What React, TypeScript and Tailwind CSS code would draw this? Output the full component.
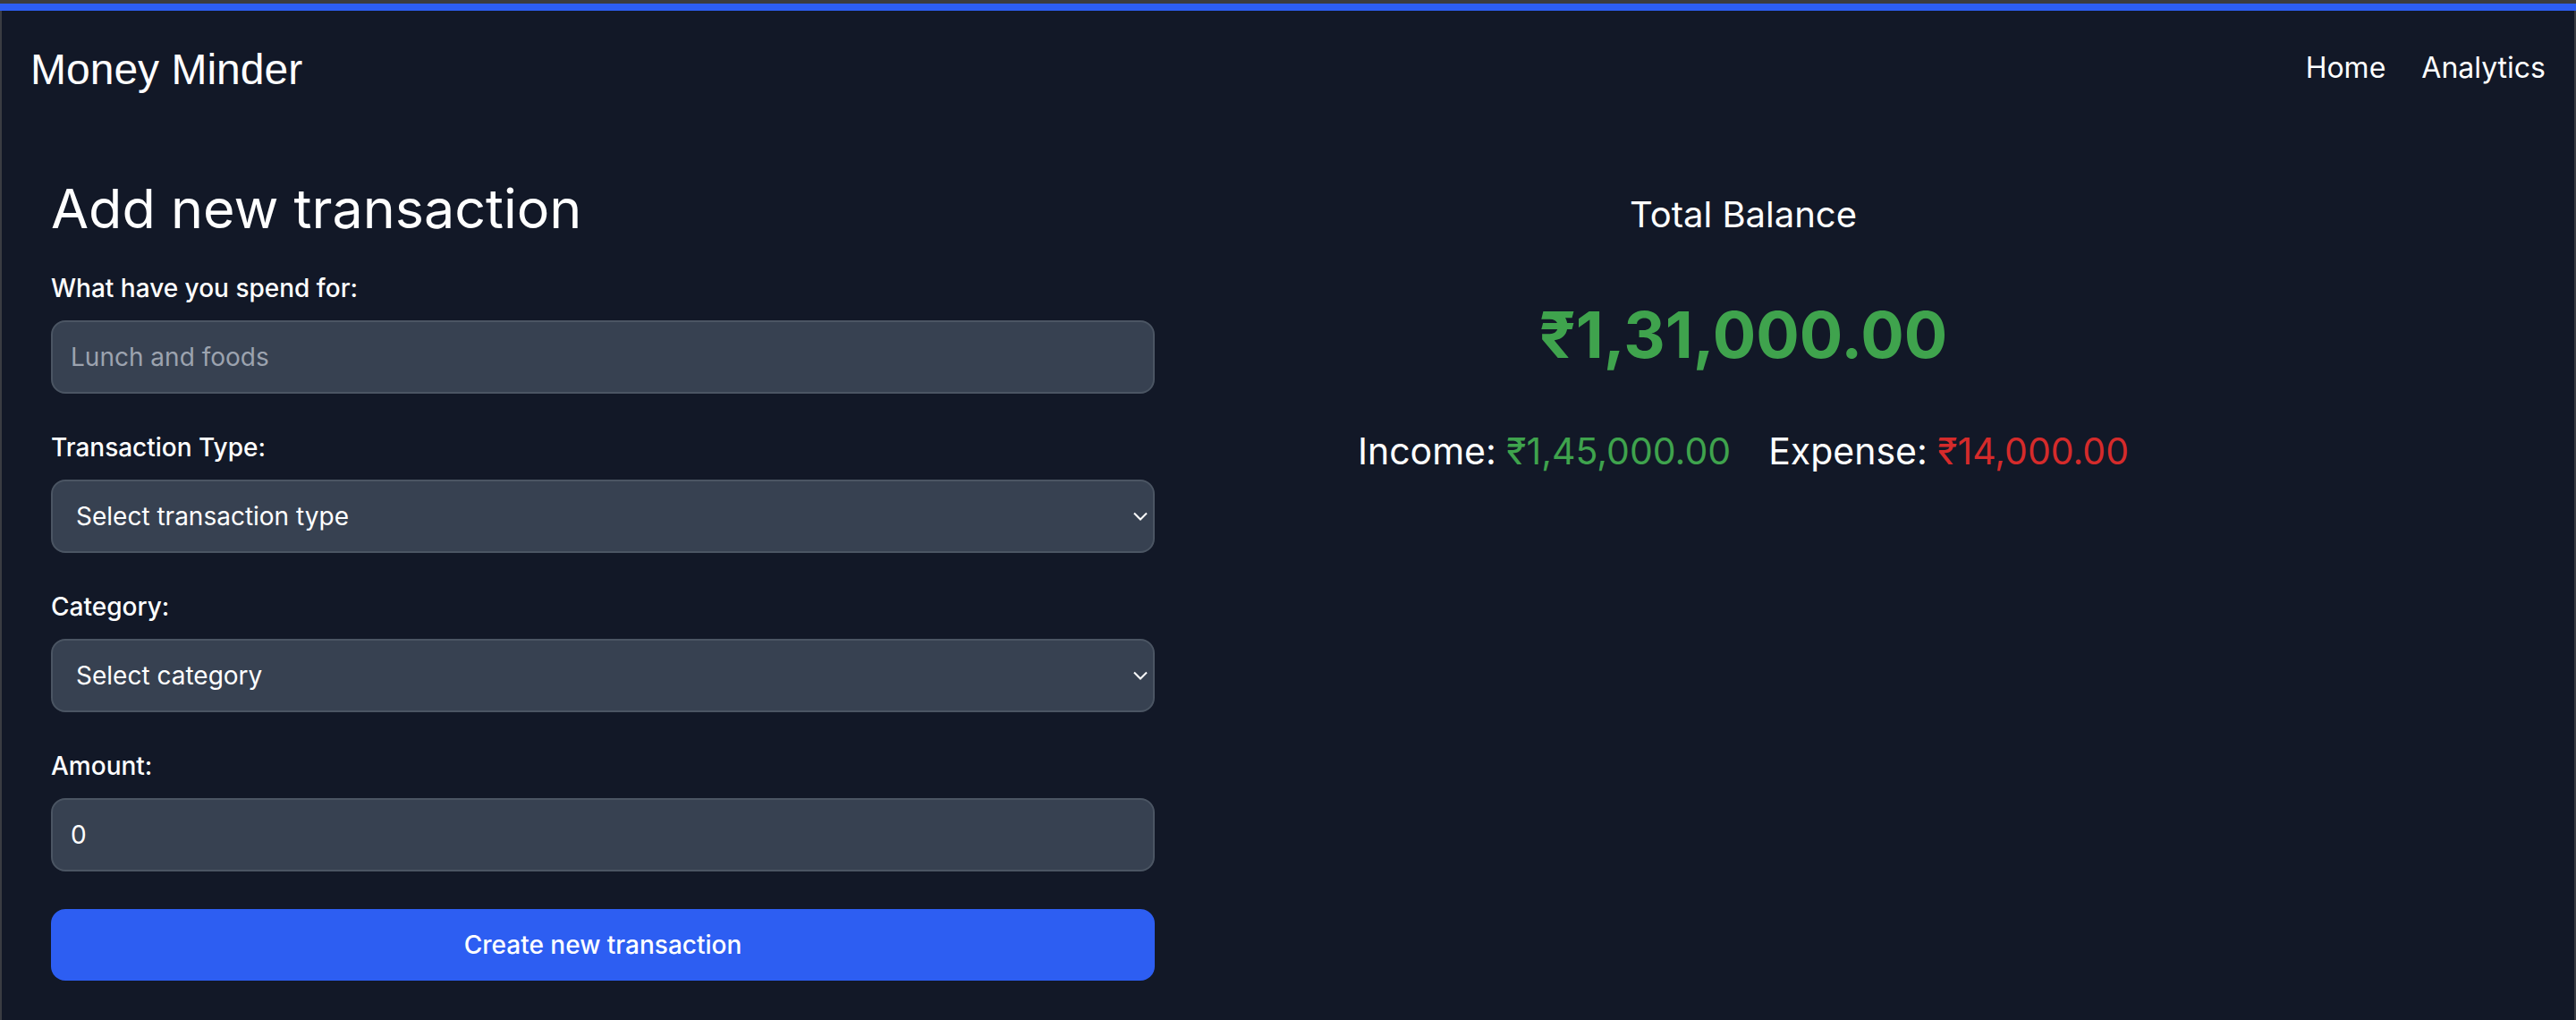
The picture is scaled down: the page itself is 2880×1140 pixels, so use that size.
import { useState } from "react";

const transactionTypes = ["Income", "Expense"];
const categories = ["Food", "Travel", "Shopping", "Bills", "Salary", "Other"];

const ChevronDown = () => (
  <svg
    width="16"
    height="10"
    viewBox="0 0 16 10"
    fill="none"
    className="pointer-events-none absolute right-[8px] top-1/2 -translate-y-1/2"
  >
    <path d="M1 1.5L8 8.5L15 1.5" stroke="white" strokeWidth="2" />
  </svg>
);

const Label = ({ text }: { text: string }) => (
  <label className="block mb-[16px] text-[28px] leading-[40px] font-medium text-white">
    {text}
  </label>
);

export default function App() {
  const [title, setTitle] = useState("");
  const [type, setType] = useState("");
  const [category, setCategory] = useState("");
  const [amount, setAmount] = useState("0");

  return (
    <div className="min-h-[1140px] bg-[#121827] font-['Inter',sans-serif] text-white">
      <div className="h-[4px] bg-[#3b3c3f]" />
      <div className="h-[8px] bg-[#2d5ef2]" />
      <div className="min-h-[1128px] border-x-2 border-[#3a3c42]">
        <nav className="flex items-center justify-between px-[32px] py-[34px]">
          <a
            href="#"
            className="font-['Liberation_Sans',Arial,sans-serif] text-[48px] leading-[64px] text-white"
          >
            Money Minder
          </a>
          <div className="flex items-center gap-[40px] text-[32px] leading-[48px] -mt-[5px]">
            <a href="#">Home</a>
            <a href="#">Analytics</a>
          </div>
        </nav>

        <main className="flex pt-[53px]">
          <section className="ml-[55px] w-[1234px]">
            <h1 className="text-[61px] leading-[72px] mb-[33px]">Add new transaction</h1>
            <form onSubmit={(e) => e.preventDefault()}>
              <div className="mb-[40px]">
                <Label text="What have you spend for:" />
                <input
                  type="text"
                  value={title}
                  onChange={(e) => setTitle(e.target.value)}
                  placeholder="Lunch and foods"
                  className="block w-full h-[82px] px-[20px] text-[28px] leading-[40px] text-white bg-[#374151] border-2 border-[#4b5563] rounded-[16px] placeholder:text-[#9ca3af] outline-none"
                />
              </div>
              <div className="mb-[40px]">
                <Label text="Transaction Type:" />
                <div className="relative">
                  <select
                    value={type}
                    onChange={(e) => setType(e.target.value)}
                    className="block w-full h-[82px] pl-[26px] pr-[40px] appearance-none text-[28px] text-white bg-[#374151] border-2 border-[#4b5563] rounded-[16px] outline-none"
                  >
                    <option value="">Select transaction type</option>
                    {transactionTypes.map((t) => (
                      <option key={t} value={t}>
                        {t}
                      </option>
                    ))}
                  </select>
                  <ChevronDown />
                </div>
              </div>
              <div className="mb-[40px]">
                <Label text="Category:" />
                <div className="relative">
                  <select
                    value={category}
                    onChange={(e) => setCategory(e.target.value)}
                    className="block w-full h-[82px] pl-[26px] pr-[40px] appearance-none text-[28px] text-white bg-[#374151] border-2 border-[#4b5563] rounded-[16px] outline-none"
                  >
                    <option value="">Select category</option>
                    {categories.map((c) => (
                      <option key={c} value={c}>
                        {c}
                      </option>
                    ))}
                  </select>
                  <ChevronDown />
                </div>
              </div>
              <div className="mb-[42px]">
                <Label text="Amount:" />
                <input
                  type="text"
                  inputMode="numeric"
                  value={amount}
                  onChange={(e) => setAmount(e.target.value)}
                  className="block w-full h-[82px] px-[20px] text-[28px] leading-[40px] text-white bg-[#374151] border-2 border-[#4b5563] rounded-[16px] outline-none"
                />
              </div>
              <button
                type="submit"
                className="block w-full h-[80px] text-[28px] leading-[40px] font-medium text-white bg-[#2d5ef2] rounded-[16px]"
              >
                Create new transaction
              </button>
            </form>
          </section>

          <section className="w-[1316px] flex flex-col items-center pt-[15px]">
            <h2 className="text-[40px] leading-[56px]">Total Balance</h2>
            <p className="mt-[66px] text-[72px] leading-[80px] font-bold text-[#3fa34d]">
              ₹1,31,000.00
            </p>
            <div className="mt-[62px] flex gap-[42px] text-[41px] leading-[56px]">
              <span>
                Income: <span className="text-[#3fa34d]">₹1,45,000.00</span>
              </span>
              <span>
                Expense: <span className="text-[#d52b2b]">₹14,000.00</span>
              </span>
            </div>
          </section>
        </main>
      </div>
    </div>
  );
}
